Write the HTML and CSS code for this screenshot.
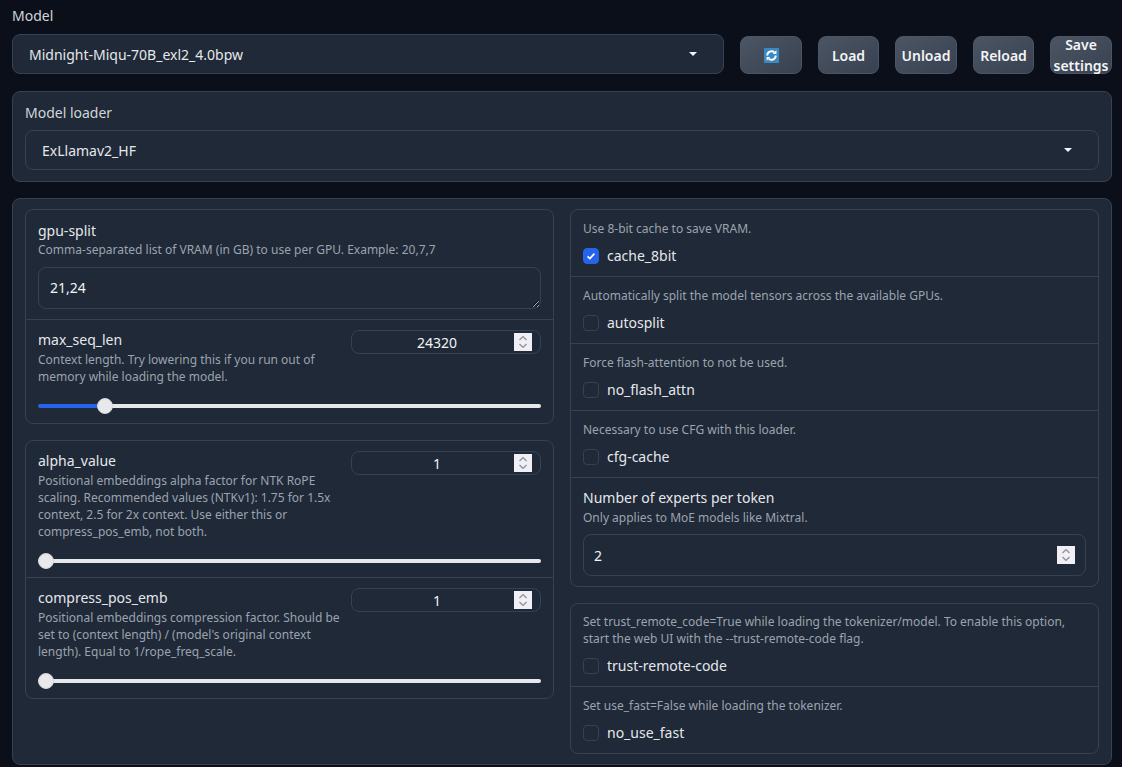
FILE: index.html
```html
<!DOCTYPE html>
<html>
<head>
<title>Model</title>
<meta charset="UTF-8">
<link rel="stylesheet" href="styles.css">
</head>
<body>
<div class="model-row">
  <div class="model-pick">
    <div class="label-top">Model</div>
    <div class="dropdown"><span>Midnight-Miqu-70B_exl2_4.0bpw</span><i class="caret"></i></div>
  </div>
  <button class="btn">
    <svg width="15" height="15" viewBox="0 0 14 14">
      <rect width="14" height="14" fill="#3b88c3"/>
      <path d="M3 7a4 4 0 0 1 6.6-3" fill="none" stroke="#fff" stroke-width="1.8"/>
      <path d="M11 7a4 4 0 0 1-6.6 3" fill="none" stroke="#fff" stroke-width="1.8"/>
      <path d="M8.2 5.6h3.4V2.2z" fill="#fff"/>
      <path d="M5.8 8.4H2.4v3.4z" fill="#fff"/>
    </svg>
  </button>
  <button class="btn btn-narrow">Load</button>
  <button class="btn">Unload</button>
  <button class="btn btn-narrow">Reload</button>
  <button class="btn">Save settings</button>
</div>

<div class="panel loader-panel">
  <div class="label-top">Model loader</div>
  <div class="dropdown"><span>ExLlamav2_HF</span><i class="caret"></i></div>
</div>

<div class="panel options">
  <div class="column">
    <div class="block">
      <div class="row gpu-row">
        <div class="name">gpu-split</div>
        <div class="info">Comma-separated list of VRAM (in GB) to use per GPU. Example: 20,7,7</div>
        <textarea class="text-area">21,24</textarea>
      </div>
      <div class="row slider-row seq-row">
        <div class="slider-head">
          <div class="slider-text">
            <div class="name">max_seq_len</div>
            <div class="info">Context length. Try lowering this if you run out of memory while loading the model.</div>
          </div>
          <input class="num-small" type="number" value="24320">
        </div>
        <input class="range" type="range" min="0" max="100" step="0.1" value="12.1" style="--fill: 13.3%">
      </div>
    </div>
    <div class="block">
      <div class="row slider-row alpha-row">
        <div class="slider-head">
          <div class="slider-text">
            <div class="name">alpha_value</div>
            <div class="info">Positional embeddings alpha factor for NTK RoPE scaling. Recommended values (NTKv1): 1.75 for 1.5x context, 2.5 for 2x context. Use either this or compress_pos_emb, not both.</div>
          </div>
          <input class="num-small" type="number" value="1">
        </div>
        <input class="range" type="range" min="0" max="100" value="0" style="--fill: 0%">
      </div>
      <div class="row slider-row compress-row">
        <div class="slider-head">
          <div class="slider-text">
            <div class="name">compress_pos_emb</div>
            <div class="info">Positional embeddings compression factor. Should be set to (context length) / (model's original context length). Equal to 1/rope_freq_scale.</div>
          </div>
          <input class="num-small" type="number" value="1">
        </div>
        <input class="range" type="range" min="0" max="100" value="0" style="--fill: 0%">
      </div>
    </div>
  </div>

  <div class="column">
    <div class="block">
      <div class="row check-row">
        <div class="info">Use 8-bit cache to save VRAM.</div>
        <label class="check"><span class="box box-on"><svg width="10" height="10" viewBox="0 0 10 10"><path d="M1.6 5.3l2.3 2.3 4.5-5" fill="none" stroke="#fff" stroke-width="1.7"/></svg></span>cache_8bit</label>
      </div>
      <div class="row check-row">
        <div class="info">Automatically split the model tensors across the available GPUs.</div>
        <label class="check"><span class="box"></span>autosplit</label>
      </div>
      <div class="row check-row">
        <div class="info">Force flash-attention to not be used.</div>
        <label class="check"><span class="box"></span>no_flash_attn</label>
      </div>
      <div class="row check-row">
        <div class="info">Necessary to use CFG with this loader.</div>
        <label class="check"><span class="box"></span>cfg-cache</label>
      </div>
      <div class="row experts-row">
        <div class="name">Number of experts per token</div>
        <div class="info">Only applies to MoE models like Mixtral.</div>
        <input class="num-wide" type="number" value="2">
      </div>
    </div>
    <div class="block">
      <div class="row check-row trust-row">
        <div class="info">Set trust_remote_code=True while loading the tokenizer/model. To enable this option, start the web UI with the --trust-remote-code flag.</div>
        <label class="check"><span class="box"></span>trust-remote-code</label>
      </div>
      <div class="row check-row">
        <div class="info">Set use_fast=False while loading the tokenizer.</div>
        <label class="check"><span class="box"></span>no_use_fast</label>
      </div>
    </div>
  </div>
</div>
</body>
</html>
```

FILE: styles.css
```css
*{
    box-sizing: border-box;
}
body{
    margin: 0;
    padding: 0 10px 0 12px;
    background: #0b0f19;
    color: #f3f4f6;
    font-family: "Noto Sans", sans-serif;
    font-size: 14px;
    overflow: hidden;
}
.model-row{
    display: flex;
    align-items: flex-end;
    height: 74px;
    gap: 16px;
}
.model-pick{
    width: 712px;
    flex: none;
}
.label-top{
    font-size: 14px;
    line-height: 20px;
    color: #d1d5db;
    margin-bottom: 8px;
}
.model-pick .label-top{
    padding-top: 6px;
}
.dropdown{
    height: 40px;
    display: flex;
    align-items: center;
    justify-content: space-between;
    padding: 0 26px 0 16px;
    background: #1f2937;
    border: 1px solid #374151;
    border-radius: 8px;
    font-size: 14px;
    color: #e5e7eb;
}
.caret{
    width: 0;
    height: 0;
    border-left: 4px solid transparent;
    border-right: 4px solid transparent;
    border-top: 4px solid #f3f4f6;
}
.btn{
    width: 62px;
    height: 38px;
    flex: none;
    display: flex;
    align-items: center;
    justify-content: center;
    padding: 0;
    background: linear-gradient(to bottom right, #4b5563, #374151);
    border: 1px solid #4b5563;
    border-radius: 8px;
    color: #f3f4f6;
    font-family: inherit;
    font-size: 14px;
    font-weight: 600;
    line-height: 21px;
}
.btn-narrow{
    width: 61px;
}
.panel{
    width: 1100px;
    background: #1f2937;
    border: 1px solid #374151;
    border-radius: 8px;
}
.loader-panel{
    margin-top: 17px;
    height: 91px;
    padding: 11px 12px 0;
}
.loader-panel .label-top{
    margin-bottom: 7px;
}
.options{
    margin-top: 16px;
    height: 567px;
    padding: 10px 13px 0 12px;
    display: grid;
    grid-template-columns: 529px 529px;
    gap: 16px;
}
.column{
    display: flex;
    flex-direction: column;
    gap: 16px;
}
.block{
    border: 1px solid #374151;
    border-radius: 8px;
}
.row{
    padding: 10px 12px 0;
}
.row + .row{
    border-top: 1px solid #374151;
}
.name{
    font-size: 14px;
    line-height: 21px;
    color: #e5e7eb;
}
.info{
    font-size: 12px;
    line-height: 17px;
    color: #9ca3af;
}
.text-area{
    display: block;
    width: 100%;
    height: 42px;
    margin-top: 9px;
    padding: 9px 10px 9px 11px;
    background: #1f2937;
    border: 1px solid #374151;
    border-radius: 8px;
    color: #f3f4f6;
    font-family: inherit;
    font-size: 14px;
    line-height: 21px;
    outline: none;
}
.gpu-row{
    height: 109px;
}
.slider-head{
    display: flex;
    justify-content: space-between;
}
.slider-text{
    width: 305px;
    margin-top: -1px;
}
.slider-text .name{
    margin-bottom: 1px;
}
.num-small{
    width: 190px;
    height: 24px;
    flex: none;
    padding: 0 8px;
    background: #1f2937;
    border: 1px solid #374151;
    border-radius: 8px;
    color: #f3f4f6;
    font-family: inherit;
    font-size: 14px;
    text-align: center;
    outline: none;
}
.num-wide{
    display: block;
    width: 100%;
    height: 42px;
    margin-top: 8px;
    padding: 0 10px;
    background: #1f2937;
    border: 1px solid #374151;
    border-radius: 8px;
    color: #f3f4f6;
    font-family: inherit;
    font-size: 14px;
    outline: none;
}
input[type="number"]::-webkit-inner-spin-button{
    -webkit-appearance: none;
    appearance: none;
    opacity: 1;
    width: 18px;
    height: 18px;
    margin: 0;
    background: #efeff5 url("data:image/svg+xml,%3Csvg xmlns='http://www.w3.org/2000/svg' width='18' height='18'%3E%3Cpath d='M5.5 7 9 3.6 12.5 7M5.5 11 9 14.4 12.5 11' fill='none' stroke='%238b8f98' stroke-width='1.3'/%3E%3C/svg%3E") no-repeat center;
}
.range{
    -webkit-appearance: none;
    appearance: none;
    display: block;
    width: 100%;
    height: 16px;
    margin: 13px 0 0;
    background: transparent;
    outline: none;
}
.range::-webkit-slider-runnable-track{
    height: 4px;
    border-radius: 2px;
    background: linear-gradient(to right, #2563eb var(--fill), #e5e7eb var(--fill));
}
.range::-webkit-slider-thumb{
    -webkit-appearance: none;
    width: 16px;
    height: 16px;
    margin-top: -6px;
    border-radius: 50%;
    background: #e9e9ec;
    border: 1px solid #d1d5db;
}
.seq-row{
    height: 104px;
}
.alpha-row{
    height: 136px;
}
.compress-row{
    height: 121px;
}
.check-row{
    height: 67px;
}
.check-row:first-child{
    height: 66px;
}
.check{
    display: flex;
    align-items: center;
    gap: 8px;
    margin-top: 8px;
    font-size: 14px;
    line-height: 21px;
    color: #e5e7eb;
}
.box{
    width: 16px;
    height: 16px;
    display: flex;
    align-items: center;
    justify-content: center;
    background: #1f2937;
    border: 1px solid #374151;
    border-radius: 4px;
}
.box-on{
    background: #2563eb;
    border-color: #2563eb;
}
.experts-row{
    height: 109px;
}
.experts-row .name{
    margin-top: -1px;
    margin-bottom: 1px;
}
.trust-row.check-row{
    height: 82px;
}
.trust-row .info{
    line-height: 16.5px;
}
```
